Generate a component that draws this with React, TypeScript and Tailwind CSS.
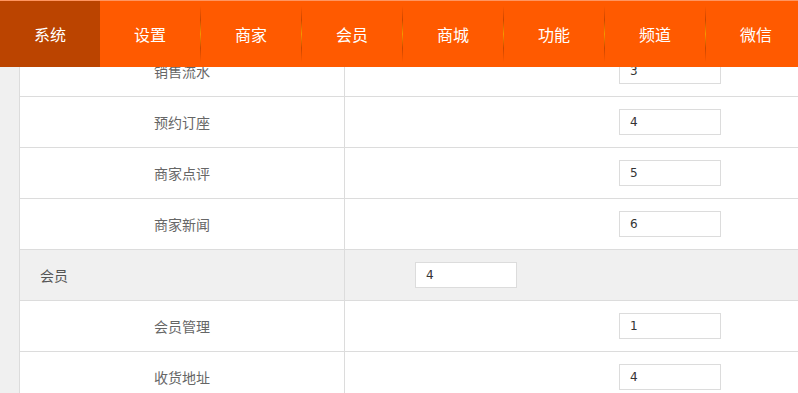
const NAV = ["系统", "设置", "商家", "会员", "商城", "功能", "频道", "微信"]

type Row = { name: string; sort: string; group?: boolean }

const ROWS: Row[] = [
  { name: "销售流水", sort: "3" },
  { name: "预约订座", sort: "4" },
  { name: "商家点评", sort: "5" },
  { name: "商家新闻", sort: "6" },
  { name: "会员", sort: "4", group: true },
  { name: "会员管理", sort: "1" },
  { name: "收货地址", sort: "4" },
]

const cjk = "font-['Noto_Sans_CJK_SC','Noto_Sans',sans-serif]"

function SortInput({ value }: { value: string }) {
  return (
    <div className="flex h-[26px] w-[102px] items-center border border-[#dcdcdc] bg-white pl-[10px] font-['DejaVu_Sans',sans-serif] text-[12px] text-[#333]">
      {value}
    </div>
  )
}

export default function App() {
  return (
    <div className={`relative h-[393px] w-[798px] overflow-hidden bg-white ${cjk}`}>
      {/* top menu, fixed over the list */}
      <div className="absolute inset-x-0 top-0 z-10 flex h-[67px] border-t border-[#ff9560] bg-[#ff5a00]">
        {NAV.map((n, i) => (
          <div key={n} className="flex h-full items-center">
            {i > 1 && (
              <span className="h-[56px] w-px bg-[linear-gradient(to_bottom,#ff5a00,#c84600_25%,#f59800_50%,#c84600_75%,#ff5a00)]" />
            )}
            <div
              className={`flex h-full w-[100px] shrink-0 items-center justify-center text-[16px] text-white ${
                i === 0 ? "bg-[#bb4400]" : ""
              }`}
            >
              {n}
            </div>
          </div>
        ))}
      </div>

      <div className="flex pt-[46px]">
        <div className="w-[20px] shrink-0 border-r border-[#dcdcdc] bg-[#f0f0f0]" />
        <div className="w-[900px] shrink-0">
          {ROWS.map((r) => (
            <div
              key={r.name}
              className={`flex h-[51px] border-b border-[#dcdcdc] ${r.group ? "bg-[#f0f0f0]" : "bg-white"}`}
            >
              {r.group ? (
                <>
                  <div className="flex w-[325px] shrink-0 items-center border-r border-[#dcdcdc] pl-[20px] text-[14px] text-[#555]">
                    {r.name}
                  </div>
                  <div className="flex items-center pl-[70px]">
                    <SortInput value={r.sort} />
                  </div>
                </>
              ) : (
                <>
                  <div className="flex w-[325px] shrink-0 items-center justify-center border-r border-[#dcdcdc] text-[14px] text-[#666]">
                    {r.name}
                  </div>
                  <div className="flex items-center pl-[274px]">
                    <SortInput value={r.sort} />
                  </div>
                </>
              )}
            </div>
          ))}
        </div>
      </div>
    </div>
  )
}
